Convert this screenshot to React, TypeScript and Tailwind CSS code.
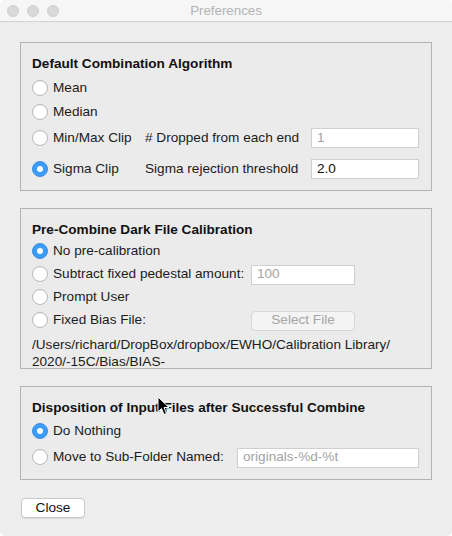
import React from "react";

const FONT = { fontFamily: '"Liberation Sans", Arial, sans-serif' };

function Radio({ checked = false }: { checked?: boolean }) {
  if (checked) {
    return (
      <span className="w-[16px] h-[16px] rounded-full bg-[#3d9bfa] border border-[#3a8ee6] flex items-center justify-center shrink-0">
        <span className="w-[6px] h-[6px] rounded-full bg-white" />
      </span>
    );
  }
  return (
    <span className="w-[16px] h-[16px] rounded-full bg-white border border-[#b9b9b9] shadow-[inset_0_1px_0_rgba(0,0,0,0.04)] shrink-0" />
  );
}

function Option({ label, checked, width }: { label: string; checked?: boolean; width?: string }) {
  return (
    <div className={`flex items-center gap-[5px] shrink-0 ${width ?? ""}`}>
      <Radio checked={checked} />
      <span className="text-[13.6px] text-[#1b1b1b] whitespace-nowrap">{label}</span>
    </div>
  );
}

function Field({ value, dim, width }: { value: string; dim?: boolean; width: string }) {
  return (
    <div
      className={`${width} h-[20px] bg-white border border-[#cfcfcf] flex items-center px-[5px] text-[13.6px] ${
        dim ? "text-[#a3a3a3]" : "text-[#111]"
      }`}
    >
      {value}
    </div>
  );
}

function Cursor() {
  return (
    <svg className="absolute left-[157px] top-[396px]" width="13" height="20" viewBox="0 0 13 20">
      <path
        d="M1 1 L1 16 L4.5 12.5 L7 18.5 L9.5 17.5 L7 11.5 L12 11.5 Z"
        fill="#000"
        stroke="#fff"
        strokeWidth="1"
        strokeLinejoin="round"
      />
    </svg>
  );
}

export default function App() {
  return (
    <div className="w-[452px] h-[536px] bg-white" style={FONT}>
      <div className="relative w-full h-full bg-[#ededed] rounded-[5px] overflow-hidden">
        {/* title bar */}
        <div className="h-[22px] bg-[#f6f6f6] border-b border-[#d3d3d3] flex items-center relative">
          <div className="flex gap-[8px] pl-[7px]">
            <span className="w-[12px] h-[12px] rounded-full bg-[#d9d9d9] border border-[#cdcdcd]" />
            <span className="w-[12px] h-[12px] rounded-full bg-[#d9d9d9] border border-[#cdcdcd]" />
            <span className="w-[12px] h-[12px] rounded-full bg-[#d9d9d9] border border-[#cdcdcd]" />
          </div>
          <div className="absolute inset-0 flex items-center justify-center text-[13.3px] text-[#b4b4b4]">
            Preferences
          </div>
        </div>

        <div className="px-[20px] pt-[20px]">
          {/* group 1 */}
          <div className="border border-[#b3b3b3] bg-[#ebebeb] pt-[13px] pb-[9px] pl-[11px]">
            <div className="h-[16px] flex items-center text-[13.6px] font-bold text-[#111]">
              Default Combination Algorithm
            </div>
            <div className="mt-[4px] h-[24px] flex items-center">
              <Option label="Mean" />
            </div>
            <div className="h-[24px] flex items-center">
              <Option label="Median" />
            </div>
            <div className="mt-[2px] h-[24px] flex items-center">
              <Option label="Min/Max Clip" width="w-[113px]" />
              <span className="w-[166px] text-[13.6px] text-[#1b1b1b]"># Dropped from each end</span>
              <Field value="1" dim width="w-[108px]" />
            </div>
            <div className="mt-[7px] h-[24px] flex items-center">
              <Option label="Sigma Clip" checked width="w-[113px]" />
              <span className="w-[166px] text-[13.6px] text-[#1b1b1b]">Sigma rejection threshold</span>
              <Field value="2.0" width="w-[108px]" />
            </div>
          </div>

          {/* group 2 */}
          <div className="mt-[17px] h-[161px] overflow-hidden border border-[#b3b3b3] bg-[#ebebeb] pt-[13px] pl-[11px]">
            <div className="h-[16px] flex items-center text-[13.6px] font-bold text-[#111]">
              Pre-Combine Dark File Calibration
            </div>
            <div className="mt-[2px] h-[23px] flex items-center">
              <Option label="No pre-calibration" checked />
            </div>
            <div className="h-[23px] flex items-center">
              <Option label="Subtract fixed pedestal amount:" width="w-[219px]" />
              <Field value="100" dim width="w-[104px]" />
            </div>
            <div className="h-[23px] flex items-center">
              <Option label="Prompt User" />
            </div>
            <div className="h-[23px] flex items-center">
              <Option label="Fixed Bias File:" width="w-[219px]" />
              <div className="w-[104px] h-[20px] rounded-[4px] bg-[#f4f4f4] border border-[#d6d6d6] flex items-center justify-center text-[13.6px] text-[#a5a5a5]">
                Select File
              </div>
            </div>
            <div className="mt-[4px] text-[13.6px] leading-[17px] text-[#1b1b1b] whitespace-nowrap">
              /Users/richard/DropBox/dropbox/EWHO/Calibration Library/
              <br />
              2020/-15C/Bias/BIAS-
            </div>
          </div>

          {/* group 3 */}
          <div className="mt-[17px] border border-[#b3b3b3] bg-[#ebebeb] pt-[13px] pb-[10px] pl-[11px]">
            <div className="h-[16px] flex items-center text-[13.6px] font-bold text-[#111]">
              Disposition of Input Files after Successful Combine
            </div>
            <div className="mt-[4px] h-[23px] flex items-center">
              <Option label="Do Nothing" checked />
            </div>
            <div className="mt-[3px] h-[23px] flex items-center">
              <Option label="Move to Sub-Folder Named:" width="w-[205px]" />
              <Field value="originals-%d-%t" dim width="w-[182px]" />
            </div>
          </div>

          {/* close */}
          <div className="mt-[18px] flex">
            <div className="w-[64px] h-[20px] ml-[1px] rounded-[4px] bg-white border border-[#c8c8c8] shadow-[0_1px_0_rgba(0,0,0,0.08)] flex items-center justify-center text-[13.6px] text-[#111]">
              Close
            </div>
          </div>
        </div>

        <Cursor />
      </div>
    </div>
  );
}
